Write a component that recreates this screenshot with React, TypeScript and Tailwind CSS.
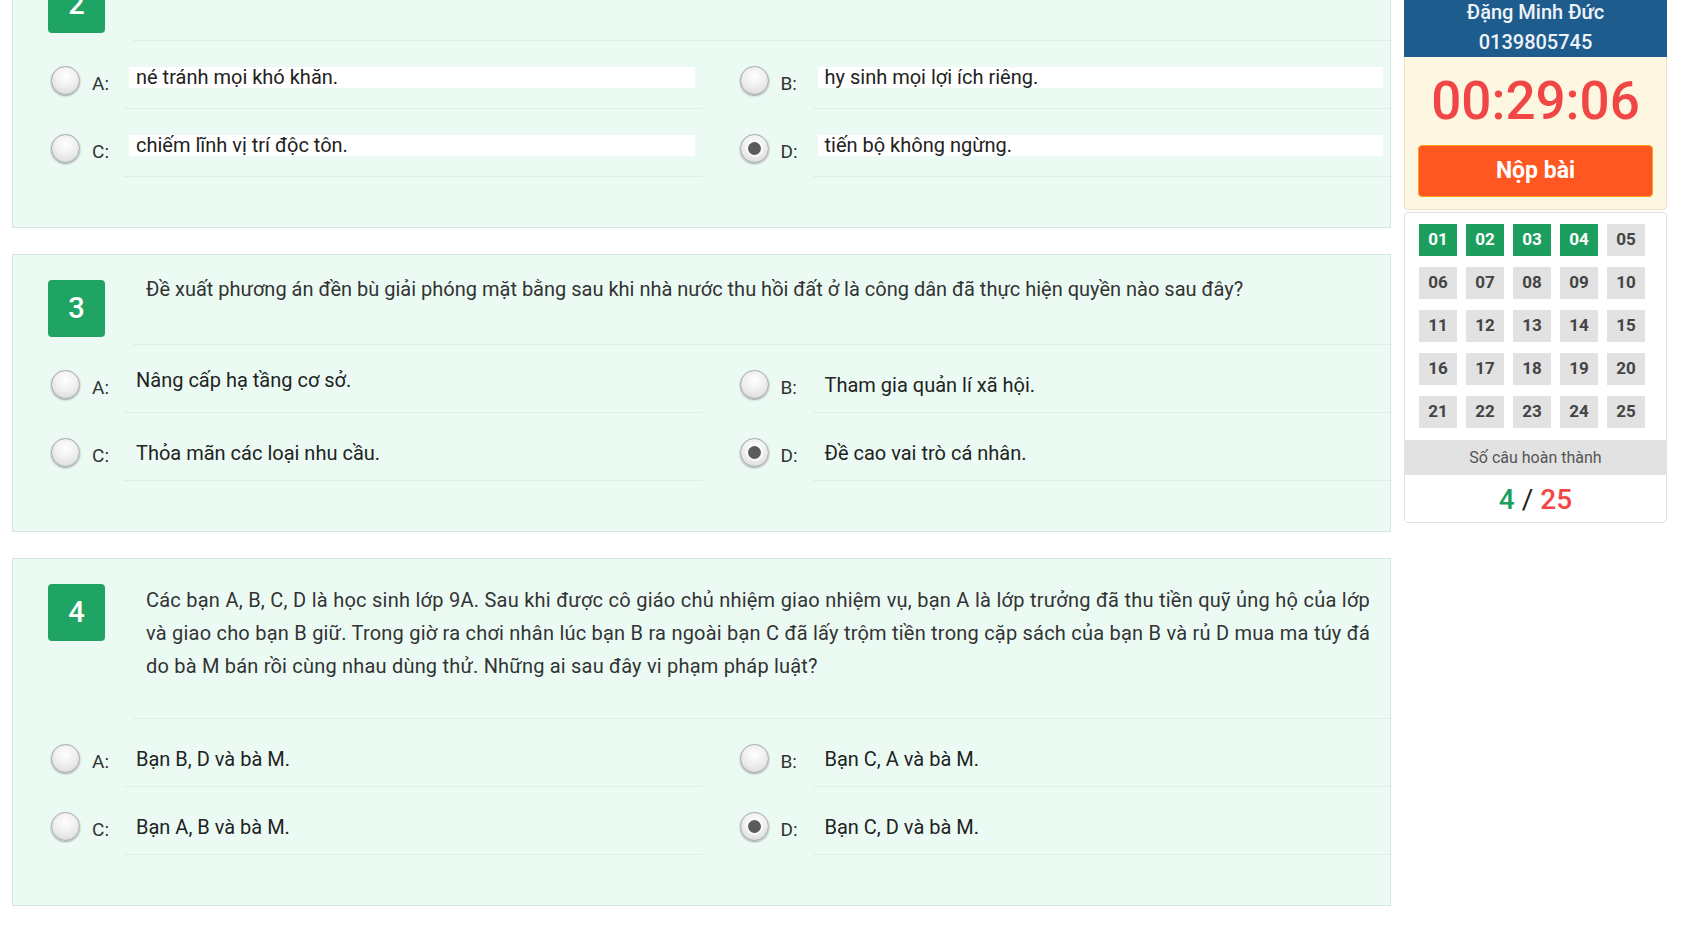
import React from 'react'

type Option = { key: string; text: string; raised?: boolean }

interface Question {
  no: number
  text: string
  textTop: string
  highlight?: boolean
  tight?: boolean
  options: Option[]
  chosen: string
}

const questions: Question[] = [
  {
    no: 2,
    text: 'Trong cuộc sống, người có phẩm chất đạo đức tốt luôn luôn cố gắng phấn đấu vươn lên, biết đặt lợi ích chung lên trên và hướng tới sự',
    textTop: 'pt-[18px]',
    highlight: true,
    chosen: 'D',
    options: [
      { key: 'A', text: 'né tránh mọi khó khăn.', raised: true },
      { key: 'B', text: 'hy sinh mọi lợi ích riêng.', raised: true },
      { key: 'C', text: 'chiếm lĩnh vị trí độc tôn.', raised: true },
      { key: 'D', text: 'tiến bộ không ngừng.', raised: true }
    ]
  },
  {
    no: 3,
    text: 'Đề xuất phương án đền bù giải phóng mặt bằng sau khi nhà nước thu hồi đất ở là công dân đã thực hiện quyền nào sau đây?',
    textTop: 'pt-[18px]',
    chosen: 'D',
    options: [
      { key: 'A', text: 'Nâng cấp hạ tầng cơ sở.', raised: true },
      { key: 'B', text: 'Tham gia quản lí xã hội.' },
      { key: 'C', text: 'Thỏa mãn các loại nhu cầu.' },
      { key: 'D', text: 'Đề cao vai trò cá nhân.' }
    ]
  },
  {
    no: 4,
    text: 'Các bạn A, B, C, D là học sinh lớp 9A. Sau khi được cô giáo chủ nhiệm giao nhiệm vụ, bạn A là lớp trưởng đã thu tiền quỹ ủng hộ của lớp và giao cho bạn B giữ. Trong giờ ra chơi nhân lúc bạn B ra ngoài bạn C đã lấy trộm tiền trong cặp sách của bạn B và rủ D mua ma túy đá do bà M bán rồi cùng nhau dùng thử. Những ai sau đây vi phạm pháp luật?',
    textTop: 'pt-[25px]',
    tight: true,
    chosen: 'D',
    options: [
      { key: 'A', text: 'Bạn B, D và bà M.' },
      { key: 'B', text: 'Bạn C, A và bà M.' },
      { key: 'C', text: 'Bạn A, B và bà M.' },
      { key: 'D', text: 'Bạn C, D và bà M.' }
    ]
  }
]

const done = [1, 2, 3, 4]

const Radio = ({ checked }: { checked: boolean }) => (
  <div className="w-[29px] h-[29px] rounded-full border border-[#a8a8a8] bg-[radial-gradient(circle_at_50%_35%,#ffffff_0%,#f0f0f0_45%,#d4d4d4_100%)] shadow-[0_1px_2px_rgba(0,0,0,0.35)] flex items-center justify-center">
    {checked && <div className="w-[13px] h-[13px] rounded-full bg-[#5b5b5b] shadow-[0_0_0_2px_rgba(255,255,255,0.6)]" />}
  </div>
)

const OptionCell = ({ opt, checked, highlight }: { opt: Option; checked: boolean; highlight?: boolean }) => (
  <div className="flex h-[68px]">
    <div className="w-[111px] shrink-0 flex items-center pt-[12px] pb-[1px]">
      <div className="ml-[38px]">
        <Radio checked={checked} />
      </div>
      <span className="ml-[12px] mt-[7px] text-[19px] text-[#333]">{opt.key}:</span>
    </div>
    <div className="flex-1 border-b border-[#dfeee7] flex items-center pt-[12px] pr-[7px]">
      {highlight ? (
        <div className="ml-[5px] flex-1 bg-white pl-[7px] leading-[21px] text-[20px] text-[#222] -mt-[7px]">{opt.text}</div>
      ) : (
        <div className={`pl-[12px] text-[20px] text-[#222] ${opt.raised ? '-mt-[9px]' : ''}`}>{opt.text}</div>
      )}
    </div>
  </div>
)

const QuestionCard = ({ q }: { q: Question }) => (
  <div className="bg-[#ebfbf4] border border-[#d6e4dd] pb-[50px]">
    <div className="flex">
      <div className="w-[120px] shrink-0 pt-[25px] pb-[8px]">
        <div className="ml-[35px] w-[57px] h-[57px] rounded-[4px] bg-[#1fa463] text-white text-[29px] font-medium flex items-center justify-center">
          {q.no}
        </div>
      </div>
      <div className={`flex-1 border-b border-[#dfeee7] pl-[13px] pr-[20px] pb-[35px] ${q.textTop}`}>
        <p
          className={`text-[20px] leading-[33px] text-[#333] text-justify ${q.highlight ? 'bg-white -mt-[6px]' : ''} ${
            q.tight ? 'tracking-[0.2px]' : ''
          }`}
        >
          {q.text}
        </p>
      </div>
    </div>
    <div className="grid grid-cols-2">
      {q.options.map(o => (
        <OptionCell key={o.key} opt={o} checked={o.key === q.chosen} highlight={q.highlight} />
      ))}
    </div>
  </div>
)

export default function App() {
  return (
    <div className="w-[1682px] h-[925px] overflow-hidden bg-white flex font-['Roboto',sans-serif]">
      <div className="ml-[12px] w-[1379px] shrink-0 -mt-[50px] flex flex-col gap-[26px]">
        {questions.map(q => (
          <QuestionCard key={q.no} q={q} />
        ))}
      </div>

      <div className="ml-[13px] w-[263px] shrink-0 flex flex-col">
        <div className="h-[57px] bg-[#1f5c8e] flex flex-col justify-end items-center text-[#eef3f8] font-medium text-[20px] leading-[30px] overflow-hidden">
          <div>Đặng Minh Đức</div>
          <div>0139805745</div>
        </div>

        <div className="bg-[#fdf6e1] border-x border-b border-[#ece3cb] rounded-b-[4px] pt-[14px] pb-[12px] px-[13px] flex flex-col items-center">
          <div className="text-[53px] leading-[60px] font-medium text-[#f04646]">00:29:06</div>
          <button className="mt-[14px] w-full h-[52px] rounded-[4px] bg-[#ff5722] border border-[#f7a11a] text-white text-[23px] font-bold">
            Nộp bài
          </button>
        </div>

        <div className="mt-[2px] bg-white border border-[#e2e2e2] rounded-[4px] overflow-hidden">
          <div className="pt-[11px] px-[14px] grid grid-cols-[repeat(5,38px)] gap-x-[9px] gap-y-[11px]">
            {Array.from({ length: 25 }, (_, i) => i + 1).map(n => (
              <div
                key={n}
                className={`h-[32px] flex items-center justify-center text-[17px] font-bold ${
                  done.includes(n) ? 'bg-[#1b9e5e] text-white' : 'bg-[#e2e2e2] text-[#444]'
                }`}
              >
                {String(n).padStart(2, '0')}
              </div>
            ))}
          </div>
          <div className="mt-[12px] h-[35px] bg-[#e2e2e2] flex items-center justify-center text-[16px] text-[#555]">
            Số câu hoàn thành
          </div>
          <div className="h-[47px] pt-[2px] flex items-center justify-center text-[28px] font-medium">
            <span className="text-[#1b9e5e]">4</span>
            <span className="text-[#222] mx-[7px] font-normal">/</span>
            <span className="text-[#f04646]">25</span>
          </div>
        </div>
      </div>
    </div>
  )
}
